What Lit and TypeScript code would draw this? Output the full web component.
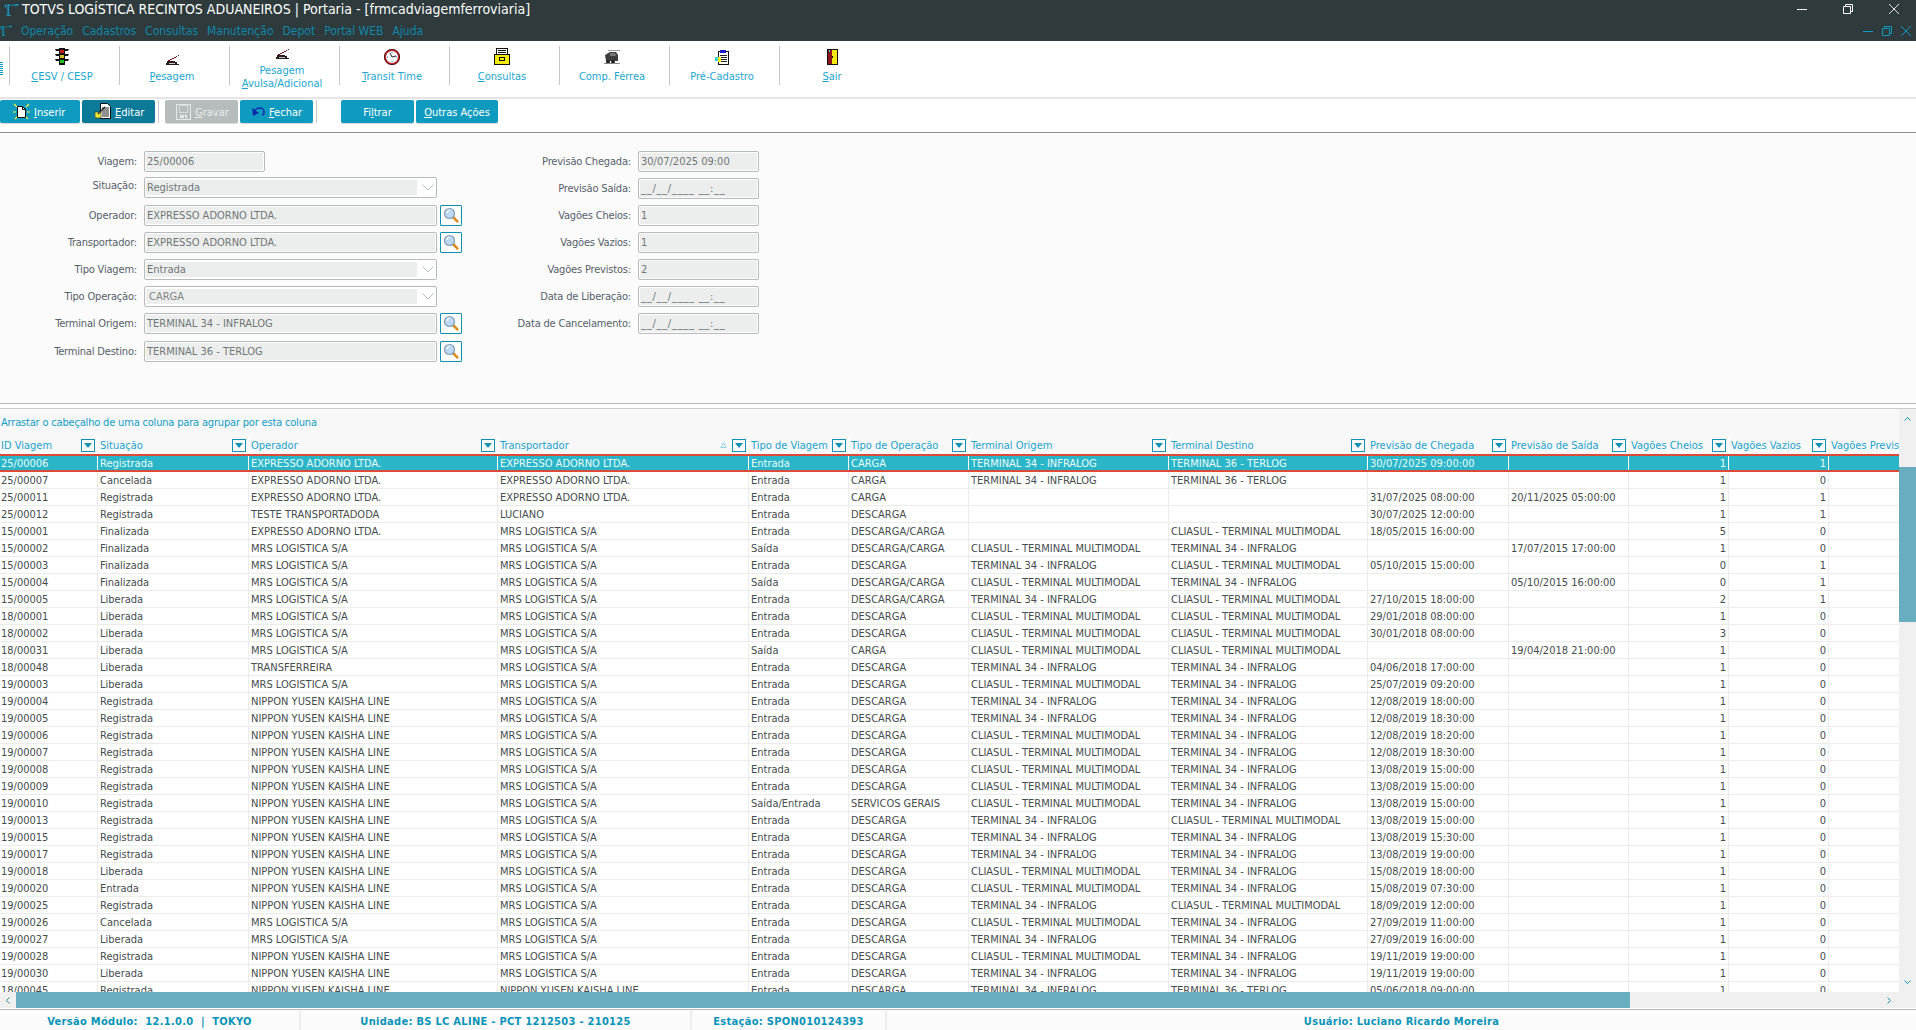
import { LitElement, html, css, svg } from "lit";
import { customElement } from "lit/decorators.js";

const E = "EXPRESSO ADORNO LTDA.";
const M = "MRS LOGISTICA S/A";
const N = "NIPPON YUSEN KAISHA LINE";
const A = "TERMINAL 34 - INFRALOG";
const B = "TERMINAL 36 - TERLOG";
const C = "CLIASUL - TERMINAL MULTIMODAL";
const D = "DESCARGA";
const DC = "DESCARGA/CARGA";

const rows: string[][] = [
  ["25/00006", "Registrada", E, E, "Entrada", "CARGA", A, B, "30/07/2025 09:00:00", "", "1", "1"],
  ["25/00007", "Cancelada", E, E, "Entrada", "CARGA", A, B, "", "", "1", "0"],
  ["25/00011", "Registrada", E, E, "Entrada", "CARGA", "", "", "31/07/2025 08:00:00", "20/11/2025 05:00:00", "1", "1"],
  ["25/00012", "Registrada", "TESTE TRANSPORTADODA", "LUCIANO", "Entrada", D, "", "", "30/07/2025 12:00:00", "", "1", "1"],
  ["15/00001", "Finalizada", E, M, "Entrada", DC, "", C, "18/05/2015 16:00:00", "", "5", "0"],
  ["15/00002", "Finalizada", M, M, "Saída", DC, C, A, "", "17/07/2015 17:00:00", "1", "0"],
  ["15/00003", "Finalizada", M, M, "Entrada", D, A, C, "05/10/2015 15:00:00", "", "0", "1"],
  ["15/00004", "Finalizada", M, M, "Saída", DC, C, A, "", "05/10/2015 16:00:00", "0", "1"],
  ["15/00005", "Liberada", M, M, "Entrada", DC, A, C, "27/10/2015 18:00:00", "", "2", "1"],
  ["18/00001", "Liberada", M, M, "Entrada", D, C, C, "29/01/2018 08:00:00", "", "1", "0"],
  ["18/00002", "Liberada", M, M, "Entrada", D, C, C, "30/01/2018 08:00:00", "", "3", "0"],
  ["18/00031", "Liberada", M, M, "Saída", "CARGA", C, C, "", "19/04/2018 21:00:00", "1", "0"],
  ["18/00048", "Liberada", "TRANSFERREIRA", M, "Entrada", D, A, A, "04/06/2018 17:00:00", "", "1", "0"],
  ["19/00003", "Liberada", M, M, "Entrada", D, C, A, "25/07/2019 09:20:00", "", "1", "0"],
  ["19/00004", "Registrada", N, M, "Entrada", D, A, A, "12/08/2019 18:00:00", "", "1", "0"],
  ["19/00005", "Registrada", N, M, "Entrada", D, A, A, "12/08/2019 18:30:00", "", "1", "0"],
  ["19/00006", "Registrada", N, M, "Entrada", D, C, A, "12/08/2019 18:20:00", "", "1", "0"],
  ["19/00007", "Registrada", N, M, "Entrada", D, C, A, "12/08/2019 18:30:00", "", "1", "0"],
  ["19/00008", "Registrada", N, M, "Entrada", D, C, A, "13/08/2019 15:00:00", "", "1", "0"],
  ["19/00009", "Registrada", N, M, "Entrada", D, C, A, "13/08/2019 15:00:00", "", "1", "0"],
  ["19/00010", "Registrada", N, M, "Saída/Entrada", "SERVICOS GERAIS", C, A, "13/08/2019 15:00:00", "", "1", "0"],
  ["19/00013", "Registrada", N, M, "Entrada", D, A, C, "13/08/2019 15:00:00", "", "1", "0"],
  ["19/00015", "Registrada", N, M, "Entrada", D, A, A, "13/08/2019 15:30:00", "", "1", "0"],
  ["19/00017", "Registrada", N, M, "Entrada", D, A, A, "13/08/2019 19:00:00", "", "1", "0"],
  ["19/00018", "Liberada", N, M, "Entrada", D, C, A, "15/08/2019 18:00:00", "", "1", "0"],
  ["19/00020", "Entrada", N, M, "Entrada", D, C, A, "15/08/2019 07:30:00", "", "1", "0"],
  ["19/00025", "Registrada", N, M, "Entrada", D, A, C, "18/09/2019 12:00:00", "", "1", "0"],
  ["19/00026", "Cancelada", M, M, "Entrada", D, C, A, "27/09/2019 11:00:00", "", "1", "0"],
  ["19/00027", "Liberada", M, M, "Entrada", D, A, A, "27/09/2019 16:00:00", "", "1", "0"],
  ["19/00028", "Registrada", N, M, "Entrada", D, C, A, "19/11/2019 19:00:00", "", "1", "0"],
  ["19/00030", "Liberada", N, M, "Entrada", D, A, A, "19/11/2019 19:00:00", "", "1", "0"],
  ["18/00045", "Registrada", N, N, "Entrada", D, A, B, "05/06/2018 09:00:00", "", "1", "0"],
];

const headers = ["ID Viagem", "Situação", "Operador", "Transportador", "Tipo de Viagem", "Tipo de Operação", "Terminal Origem", "Terminal Destino", "Previsão de Chegada", "Previsão de Saída", "Vagões Cheios", "Vagões Vazios", "Vagões Previstos"];

const crane = (w: number, h: number, c: string) => html`<svg width=${w} height=${h} viewBox="0 0 15 14" fill=${c} class="crane"><path d="M0 2h2v2H0zM3 1h2v13H3zM5 2h6V1h4v2H5zM2 13h5v1H2zM1 4h1v2H1z"/></svg>`;

const ico = {
  light: html`<svg width="14" height="17" viewBox="0 0 14 17"><path fill="#111" d="M4 0h6v17H4zM0 1h4v2H1zM14 1h-4v2h3zM0 6h4v2H1zM14 6h-4v2h3zM0 11h4v2H1zM14 11h-4v2h3z"/><rect x="5" y="2" width="4" height="3" fill="#d01818"/><rect x="5" y="7" width="4" height="3" fill="#c8c020"/><rect x="5" y="12" width="4" height="3" fill="#22c022"/></svg>`,
  scale: html`<svg width="13" height="10" viewBox="0 0 13 10" shape-rendering="crispEdges"><path fill="#7a1414" d="M2 5h2V4h2V3h2V2h2V1h2V0h1v1h-2v1H10v1H8v1H6v1H4v1H2z"/><path fill="#2a1a1a" d="M1 6h8v1h2v2h2v1H0V8h1z"/><path fill="#c9c9c9" d="M3 8h6v1H3z"/></svg>`,
  clock: html`<svg width="16" height="16" viewBox="0 0 16 16"><circle cx="8" cy="8" r="7" fill="#fff" stroke="#d0202a" stroke-width="2"/><circle cx="8" cy="8" r="7.6" fill="none" stroke="#111" stroke-width=".7"/><path d="M8 8l-2-4M8 8l4-1" stroke="#223" stroke-width="1" fill="none"/><path d="M8 3v1M13 8h-1M8 13v-1M3 8h1" stroke="#26a" stroke-width="1"/></svg>`,
  box: html`<svg width="16" height="17" viewBox="0 0 16 17" shape-rendering="crispEdges"><path fill="#fff" stroke="#111" d="M2.500 .5h11v6h-11z"/><path fill="#111" d="M4 2h8v1H4zM4 4h8v1H4z"/><path fill="#f5e90e" stroke="#111" d="M.5 6.500h15v10H.5z"/><path fill="#111" d="M5 9h6v4H5z"/><path fill="#f5e90e" d="M6 10h4v2H6z"/></svg>`,
  train: html`<svg width="16" height="15" viewBox="0 0 16 15"><path fill="#9a9a9a" d="M4 0h12v1H4z"/><path fill="#3c3c3c" d="M1 5l5-3h6l2 3v6H2z"/><path fill="#777" d="M6 3h5l1 3H6z"/><circle cx="4" cy="12" r="2" fill="#222"/><circle cx="9" cy="12" r="2" fill="#222"/><path fill="#8a8a8a" d="M0 13h16v1H0z"/></svg>`,
  clip: html`<svg width="14" height="15" viewBox="0 0 14 15" shape-rendering="crispEdges"><path fill="#fff" stroke="#111" d="M3.500 1.500h10v13h-10z"/><path fill="#1a1ac8" d="M5 0h6v3H5z"/><path fill="#222" d="M5 5h7v1H5zM5 7h7v1H5zM5 9h7v1H5zM5 11h7v1H5z"/><path fill="#30d0d8" d="M0 7h3v4H0z"/><path fill="#f5e90e" d="M3 7h3v5H3z"/></svg>`,
  door: html`<svg width="11" height="16" viewBox="0 0 11 16" shape-rendering="crispEdges"><path fill="#111" d="M0 0h11v16H0z"/><path fill="#f5e90e" d="M5 1h5v14H5z"/><path fill="#8c1616" d="M1 1h4v14H1z"/><path fill="#111" d="M5 7h1v2H5z"/><path fill="#30c0e0" d="M2 1h1v2H2z"/></svg>`,
  star: html`<svg width="17" height="17" viewBox="0 0 17 17"><path stroke="#f5ef40" stroke-width="1.200" d="M1 1l3 3M16 1l-3 3M0 9h3M14 9h3M2 16l3-3M15 16l-3-3"/><path fill="#fff" stroke="#111" stroke-width="1" d="M4.500 3.500h5l3 3v8h-8z"/><path fill="none" stroke="#111" d="M9.500 3.500v3h3"/></svg>`,
  edit: html`<svg width="16" height="17" viewBox="0 0 16 17"><path fill="#fff" stroke="#111" d="M5.500 .5h7l3 3v12h-10z"/><path stroke="#222" d="M7 5h7M7 7h7M7 9h7M7 11h7M7 13h7"/><path fill="#f0e838" stroke="#222" stroke-width=".6" d="M0 9h6v6H0z"/><path stroke="#222" stroke-width="1.200" d="M3 11l7-7"/></svg>`,
  save: html`<svg width="15" height="16" viewBox="0 0 15 16" shape-rendering="crispEdges"><path fill="none" stroke="#e4e8e8" d="M.5 .5h14v15H.5z"/><path fill="none" stroke="#d4d8d8" d="M3.500 1.500h8v7h-8z"/><path fill="#e4e8e8" d="M4 11h7v3H4z"/><path fill="#a5acac" d="M8 12h1v2H8z"/></svg>`,
  undo: html`<svg width="13" height="11" viewBox="0 0 13 11"><path fill="none" stroke="#0a2ea8" stroke-width="1.500" d="M2 6c1-3 4-4 6-4 2.500 0 4 2 4 4s-1 3-2 3"/><path fill="#0a2ea8" d="M0 2l1 8 6-3z"/></svg>`,
};

const lens = html`<svg width="16" height="16" viewBox="0 0 16 16"><path stroke="#d98a1e" stroke-width="2.600" stroke-linecap="round" d="M10 10l4.300 4.300"/><circle cx="6.500" cy="6.500" r="5" fill="#bcd8f2" stroke="#7f9fb8" stroke-width="1.200"/><path stroke="#fff" stroke-width="1.200" fill="none" d="M4 6c0-1.500 1-2.500 2.500-2.500"/></svg>`;
const chevron = html`<svg width="12" height="7" viewBox="0 0 12 7"><path fill="none" stroke="#b4bcbc" d="M.5 .5L6 6l5.500-5.500"/></svg>`;
const winBtn = (kind: string, c: string) => {
  const body =
    kind === "min" ? svg`<path d="M0 5.500h10" stroke=${c} stroke-width="1"/>`
    : kind === "max" ? svg`<path fill="none" stroke=${c} d="M.5 2.500h7v7h-7zM2.500 2.500v-2h7v7h-2"/>`
    : svg`<path stroke=${c} d="M0 0l10 10M10 0L0 10"/>`;
  return html`<svg width="10" height="10" viewBox="0 0 10 10">${body}</svg>`;
};

const leftFields = [
  { l: "Viagem", t: "short", v: "25/00006" },
  { l: "Situação", t: "combo", v: "Registrada", up: true },
  { l: "Operador", t: "lookup", v: E },
  { l: "Transportador", t: "lookup", v: E },
  { l: "Tipo Viagem", t: "combo", v: "Entrada" },
  { l: "Tipo Operação", t: "combo", v: "CARGA", pad: true },
  { l: "Terminal Origem", t: "lookup", v: A },
  { l: "Terminal Destino", t: "lookup", v: B },
];
const blank = "__/__/____ __:__";
const rightFields = [
  ["Previsão Chegada", "30/07/2025 09:00"],
  ["Previsão Saída", blank],
  ["Vagões Cheios", "1"],
  ["Vagões Vazios", "1"],
  ["Vagões Previstos", "2"],
  ["Data de Liberação", blank],
  ["Data de Cancelamento", blank],
];

const tools = [
  { i: ico.light, l: html`<u>C</u>ESV / CESP` },
  { i: ico.scale, l: html`<u>P</u>esagem` },
  { i: ico.scale, l: html`Pesagem<br /><u>A</u>vulsa/Adicional`, two: true },
  { i: ico.clock, l: html`<u>T</u>ransit Time` },
  { i: ico.box, l: html`<u>C</u>onsultas` },
  { i: ico.train, l: html`Comp. Férrea` },
  { i: ico.clip, l: html`Pré-Cadastro` },
  { i: ico.door, l: html`<u>S</u>air` },
];

@customElement("app-root")
export class AppRoot extends LitElement {
  static styles = css`
    :host {
      display: flex;
      flex-direction: column;
      height: 100vh;
      overflow: hidden;
      background: #fff;
      font-family: "DejaVu Sans Condensed", "DejaVu Sans", "Liberation Sans", sans-serif;
      font-stretch: condensed;
      font-size: 11px;
      color: #4c5354;
    }
    svg { display: block; flex: none; }
    .title {
      height: 20px;
      background: #2e3a3c;
      color: #fff;
      display: flex;
      align-items: center;
      font-size: 14px;
      padding: 0 17px 2px 4px;
      box-sizing: border-box;
    }
    .title .crane { margin-right: 3px; }
    .spacer { flex: 1; }
    .title .wb { margin-left: 36px; }
    .menu {
      height: 21px;
      background: #2e3a3c;
      color: #0f88a8;
      display: flex;
      align-items: center;
      font-size: 12px;
      padding: 0 5px 0 0;
      box-sizing: border-box;
    }
    .menu .crane { margin-right: 9px; }
    .menu .item { margin-right: 9px; }
    .menu .wb { margin-left: 9px; }
    .toolbar {
      height: 56px;
      display: flex;
      padding-top: 5px;
      padding-left: 9px;
      box-sizing: border-box;
    }
    .grip {
      width: 3px;
      height: 14px;
      margin: 16px 6px 0 -9px;
      background: repeating-linear-gradient(#0f9bc0 0 1px, #fff 1px 2px);
    }
    .tool {
      width: 110px;
      height: 39px;
      box-sizing: border-box;
      border-left: 1px solid #c4c8c8;
      padding: 3px 5px 0 0;
      display: flex;
      flex-direction: column;
      align-items: center;
      color: #1ba6d0;
      font-size: 11px;
      text-align: center;
    }
    .tool .ic { height: 16px; display: flex; align-items: flex-end; justify-content: center; }
    .tool .lb { margin-top: 5px; line-height: 14px; white-space: nowrap; }
    .tool.two .ic { height: 10px; }
    .tool.two .lb { margin-top: 5px; line-height: 13px; }
    .div1 { height: 2px; background: #e6e6e6; }
    .actions {
      height: 33px;
      display: flex;
      padding-top: 1px;
      box-sizing: border-box;
      align-items: flex-start;
    }
    .btn {
      height: 23px;
      border-radius: 2px;
      background: #0f9abf;
      color: #fff;
      display: flex;
      align-items: center;
      font-size: 11px;
      box-sizing: border-box;
      box-shadow: 0 1px 0 #d8d8d8;
      flex: none;
    }
    .btn span { padding-top: 1px; }
    .btn.center { justify-content: center; }
    .btn.edit { background: #0b7a99; }
    .btn.off { background: #b6bcbc; color: #e8ecec; }
    .btn svg { margin-right: 4px; }
    .w80 { width: 80px; padding-left: 13px; margin-right: 2px; }
    .w73 { width: 73px; padding-left: 13px; margin-right: 2px; }
    .gravar { padding-left: 11px; }
    .fechar { margin-right: 0; padding-left: 12px; }
    .plain { width: 73px; margin-right: 2px; }
    .outras { width: 82px; }
    .asep { width: 1px; height: 23px; background: #c8cccc; flex: none; }
    .asep.a { margin: 0 6px 0 1px; }
    .asep.b { margin: 0 24px 0 3px; }
    .rule1 { height: 2px; background: linear-gradient(#8c9090 0 1px, #fff 1px); }
    .form {
      height: 269px;
      background: #fbfbfb;
      box-sizing: border-box;
      padding-top: 17px;
      display: flex;
    }
    .left { width: 462px; display: flex; flex-direction: column; }
    .right { display: flex; flex-direction: column; gap: 6px; }
    .f { display: flex; align-items: center; height: 21px; }
    .lab { text-align: right; font-size: 11px; letter-spacing: -.18px; color: #56606a; white-space: nowrap; margin-top: -1px; }
    .left .lab { width: 137px; margin-right: 7px; }
    .right .lab { width: 169px; margin-right: 7px; }
    .left .f { margin-bottom: 6px; }
    .left .f.gap5 { margin-bottom: 5px; }
    .left .f.gap7 { margin-bottom: 7px; }
    .lab.up { margin-top: -5px; }
    .inp {
      height: 21px;
      box-sizing: border-box;
      border: 1px solid #b6bcbc;
      border-radius: 2px;
      background: #eceeed;
      box-shadow: inset 0 0 0 1px #fdfdfd;
      color: #6f7676;
      font-size: 11px;
      line-height: 19px;
      padding-left: 2px;
      white-space: nowrap;
      overflow: hidden;
    }
    .inp.short, .inp.r { width: 121px; }
    .inp.long { width: 293px; }
    .inp.blank { letter-spacing: .75px; }
    .combo {
      width: 293px;
      height: 21px;
      box-sizing: border-box;
      border: 1px solid #b6bcbc;
      border-radius: 2px;
      background: #fff;
      display: flex;
      align-items: center;
      padding: 2px 0 2px 1px;
      color: #6f7676;
      font-size: 11px;
    }
    .combo .v { width: 271px; height: 15px; line-height: 15px; background: #eceeed; padding-left: 1px; box-sizing: border-box; }
    .combo .v.pad { padding-left: 3px; color: #808686; }
    .combo svg { margin-left: 5px; }
    .look {
      width: 22px;
      height: 21px;
      margin: -1px 0 0 3px;
      box-sizing: border-box;
      border: 1px solid #1190b4;
      border-radius: 1px;
      background: #fff;
      display: flex;
      align-items: center;
      justify-content: center;
    }
    .rule2 { height: 6px; border-top: 1px solid #b4b8b8; border-bottom: 1px solid #c8cccc; box-sizing: border-box; background: #fff; }
    .gridarea { flex: 1; min-height: 0; display: flex; flex-direction: column; }
    .gridmain { flex: 1; min-height: 0; display: flex; }
    .content { width: 1899px; flex: none; display: flex; flex-direction: column; overflow: hidden; }
    .group {
      height: 27px;
      flex: none;
      background: #f8f8f8;
      color: #129cc4;
      box-sizing: border-box;
      padding: 7px 0 0 1px;
      font-size: 11px;
      letter-spacing: -.18px;
      line-height: 14px;
    }
    .r {
      display: grid;
      grid-template-columns: 98px 151px 249px 251px 100px 120px 200px 199px 141px 120px 100px 100px 100px;
      width: 1932px;
    }
    .head { height: 18px; flex: none; }
    .hc {
      background: #f8f8f8;
      border-right: 1px solid #fff;
      color: #1ba3cc;
      display: flex;
      align-items: center;
      padding: 0 2px 0 2px;
      box-sizing: border-box;
      font-size: 11px;
      overflow: hidden;
      white-space: nowrap;
    }
    .hc:first-child { padding-left: 1px; }
    .hc .sp { flex: 1; }
    .fb {
      width: 14px;
      height: 13px;
      box-sizing: border-box;
      border: 1px solid #1190b4;
      background: #fff;
      display: flex;
      align-items: center;
      justify-content: center;
      flex: none;
    }
    .sort { margin-right: 5px; }
    .rowsbox { flex: 1; min-height: 0; overflow: hidden; }
    .dr { height: 17px; box-sizing: border-box; border-bottom: 1px solid #ececec; color: #454c4d; font-size: 11px; line-height: 15px; }
    .dr .c { padding-top: 1px; }
    .dr.sel {
      height: 18px;
      background: #2ab6c8;
      border-top: 2px solid #dd4a38;
      border-bottom: 2px solid #dd4a38;
      color: #eefafb;
      line-height: 13px;
    }
    .c { padding-left: 2px; border-right: 1px solid #ececec; box-sizing: border-box; white-space: nowrap; overflow: hidden; }
    .c:first-child { padding-left: 1px; }
    .c.num { text-align: right; padding-right: 2px; }
    .sel .c { border-right-color: #fff; }
    .vs { width: 17px; flex: none; background: #f0f0f0; display: flex; flex-direction: column; align-items: center; }
    .vs .arr { height: 20px; flex: none; display: flex; align-items: center; justify-content: center; }
    .vs .gap { height: 38px; flex: none; }
    .vs .thumb { height: 155px; width: 17px; flex: none; background: #68aec0; }
    .vs .rest { flex: 1; }
    .hs { height: 16px; flex: none; display: flex; background: #f0f0f0; }
    .hs .arr { width: 16px; display: flex; align-items: center; justify-content: center; flex: none; }
    .hs .thumb { width: 1614px; background: #68aec0; flex: none; }
    .hs .fill { flex: 1; }
    .hs .arr.rt { width: 34px; padding-right: 20px; box-sizing: border-box; }
    .status {
      height: 21px;
      flex: none;
      margin-top: 1px;
      border-top: 1px solid #b8bcbc;
      background: #fbfbfb;
      box-sizing: border-box;
      display: grid;
      grid-template-columns: 301px 391px 195px 1fr;
      color: #0a93b8;
      font-weight: 700;
      font-size: 11px;
      letter-spacing: .3px;
    }
    .status div {
      display: flex;
      align-items: center;
      justify-content: center;
      white-space: pre;
      padding-top: 3px;
      border-right: 2px solid #eeeeee;
    }
    .status div:last-child { border-right: 0; }
  `;

  render() {
    return html`
      <div class="title">
        ${crane(15, 13, "#1f8fb5")}
        <span>TOTVS LOGÍSTICA RECINTOS ADUANEIROS | Portaria - [frmcadviagemferroviaria]</span>
        <span class="spacer"></span>
        <span class="wb">${winBtn("min", "#fff")}</span>
        <span class="wb">${winBtn("max", "#fff")}</span>
        <span class="wb">${winBtn("close", "#e8e8e8")}</span>
      </div>
      <div class="menu">
        ${crane(12, 13, "#0f88a8")}
        ${["Operação", "Cadastros", "Consultas", "Manutenção", "Depot", "Portal WEB", "Ajuda"].map((m) => html`<span class="item">${m}</span>`)}
        <span class="spacer"></span>
        <span class="wb">${winBtn("min", "#0f9bc0")}</span>
        <span class="wb">${winBtn("max", "#0f9bc0")}</span>
        <span class="wb">${winBtn("close", "#0f9bc0")}</span>
      </div>
      <div class="toolbar">
        <div class="grip"></div>
        ${tools.map(
          (t) => html`<div class="tool ${t.two ? "two" : ""}"><div class="ic">${t.i}</div><div class="lb">${t.l}</div></div>`
        )}
      </div>
      <div class="div1"></div>
      <div class="actions">
        <div class="btn w80">${ico.star}<span><u>I</u>nserir</span></div>
        <div class="btn edit w73">${ico.edit}<span><u>E</u>ditar</span></div>
        <div class="asep a"></div>
        <div class="btn off w73 gravar">${ico.save}<span><u>G</u>ravar</span></div>
        <div class="btn w73 fechar">${ico.undo}<span><u>F</u>echar</span></div>
        <div class="asep b"></div>
        <div class="btn center plain"><span>Fi<u>l</u>trar</span></div>
        <div class="btn center outras"><span><u>O</u>utras Ações</span></div>
      </div>
      <div class="rule1"></div>
      <div class="form">
        <div class="left">
          ${leftFields.map((f, i) => html`
            <div class="f ${i === 0 ? "gap5" : i === 1 || i === 6 ? "gap7" : ""}">
              <div class="lab ${f.up ? "up" : ""}">${f.l}:</div>
              ${f.t === "short"
                ? html`<div class="inp short">${f.v}</div>`
                : f.t === "combo"
                ? html`<div class="combo"><div class="v ${f.pad ? "pad" : ""}">${f.v}</div>${chevron}</div>`
                : html`<div class="inp long">${f.v}</div><div class="look">${lens}</div>`}
            </div>`)}
        </div>
        <div class="right">
          ${rightFields.map((f) => html`<div class="f"><div class="lab">${f[0]}:</div><div class="inp r ${f[1] === blank ? "blank" : ""}">${f[1]}</div></div>`)}
        </div>
      </div>
      <div class="rule2"></div>
      <div class="gridarea">
        <div class="gridmain">
          <div class="content">
            <div class="group">Arrastar o cabeçalho de uma coluna para agrupar por esta coluna</div>
            <div class="r head">
              ${headers.map((h, i) => html`<div class="hc"><span>${h}</span><span class="sp"></span>
                ${i === 3 ? html`<svg class="sort" width="7" height="6" viewBox="0 0 7 6"><path fill="none" stroke="#8fd0e6" d="M3.500 .8L6.200 5.500H.8z"/></svg>` : ""}
                ${i < 12 ? html`<span class="fb"><svg width="8" height="5" viewBox="0 0 8 5"><path fill="#1190b4" d="M0 0h8L4 5z"/></svg></span>` : ""}</div>`)}
            </div>
            <div class="rowsbox">
              ${rows.map((r, i) => html`<div class="r dr ${i === 0 ? "sel" : ""}">
                ${r.map((c, j) => html`<div class="c ${j >= 10 ? "num" : ""}">${c}</div>`)}
                <div class="c"></div>
              </div>`)}
            </div>
          </div>
          <div class="vs">
            <div class="arr"><svg width="7" height="4" viewBox="0 0 7 4"><path fill="none" stroke="#1190b4" d="M.5 3.500l3-3 3 3"/></svg></div>
            <div class="gap"></div>
            <div class="thumb"></div>
            <div class="rest"></div>
            <div class="arr"><svg width="7" height="4" viewBox="0 0 7 4"><path fill="none" stroke="#1190b4" d="M.5 .5l3 3 3-3"/></svg></div>
          </div>
        </div>
        <div class="hs">
          <div class="arr"><svg width="4" height="7" viewBox="0 0 4 7"><path fill="none" stroke="#1190b4" d="M3.500 .5l-3 3 3 3"/></svg></div>
          <div class="thumb"></div>
          <div class="fill"></div>
          <div class="arr rt"><svg width="4" height="7" viewBox="0 0 4 7"><path fill="none" stroke="#1190b4" d="M.5 .5l3 3-3 3"/></svg></div>
        </div>
      </div>
      <div class="status">
        <div>Versão Módulo:  12.1.0.0  |  TOKYO</div>
        <div>Unidade: BS LC ALINE - PCT 1212503 - 210125</div>
        <div>Estação: SPON010124393</div>
        <div>Usuário: Luciano Ricardo Moreira</div>
      </div>
    `;
  }
}
